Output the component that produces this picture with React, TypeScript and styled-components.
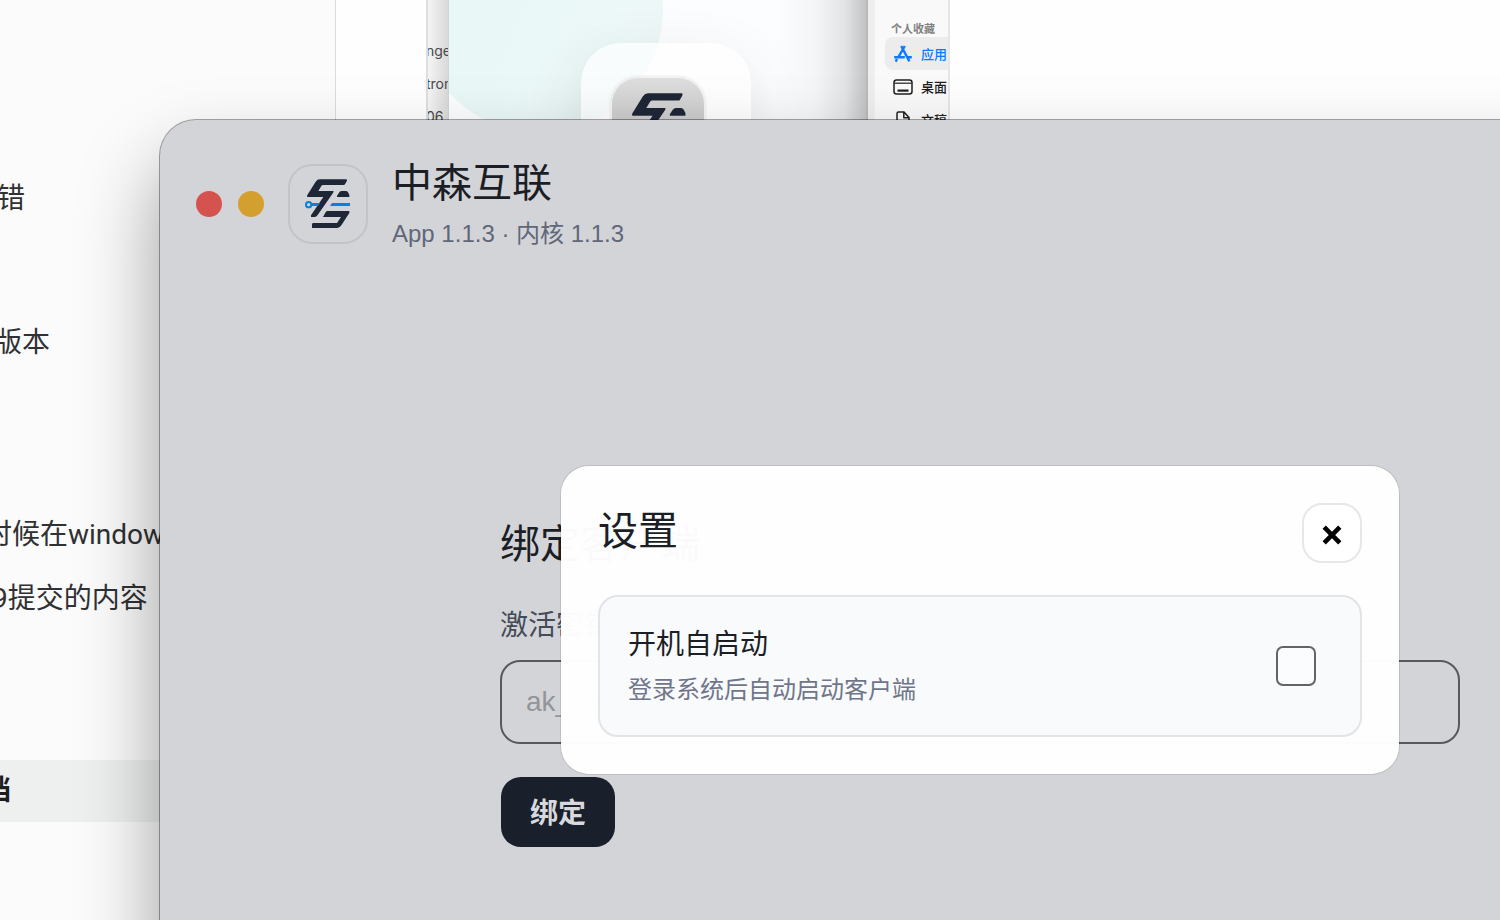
import React from 'react';
import styled, { createGlobalStyle } from 'styled-components';

const GlobalStyle = createGlobalStyle`
  *, *::before, *::after { box-sizing: border-box; }
  body {
    margin: 0;
    background: #fff;
    font-family: "Liberation Sans", "Noto Sans CJK SC", sans-serif;
  }
  h1, h2, p { margin: 0; font-weight: 400; }
  button, input { font: inherit; }
`;

const Desktop = styled.div`
  position: relative;
  height: 100vh;
  overflow: hidden;
  background: #fefefe;
`;

/* ---------- windows lying behind ---------- */

const Backdrop = styled.div`
  display: flex;
  height: 100%;
`;

const NotesPane = styled.aside`
  flex: 0 0 336px;
  padding-top: 168px;
  overflow: hidden;
  background: #fbfbfb;
  border-right: 1px solid #dcdcdc;
  font-family: Roboto, "Noto Sans CJK SC", sans-serif;
`;

const NoteLine = styled.p<{ $cut: number; $space?: number; $active?: boolean }>`
  height: 62px;
  margin-top: ${(p) => p.$space ?? 0}px;
  line-height: 62px;
  font-size: 28px;
  font-weight: ${(p) => (p.$active ? 700 : 400)};
  color: ${(p) => (p.$active ? '#1c1d1e' : '#303133')};
  background: ${(p) => (p.$active ? '#eef0ef' : 'transparent')};
  text-indent: -${(p) => p.$cut}px;
  white-space: nowrap;
`;

const BackWindows = styled.div`
  flex: 0 0 524px;
  display: flex;
  margin-left: 90px;
  height: 240px;
`;

const FileList = styled.div`
  flex: 0 0 22px;
  padding-top: 35px;
  overflow: hidden;
  border-left: 2px solid #dedede;
  background: linear-gradient(90deg, #f4f4f4, #d9d9d9);
  font: 14px/32px Inter, sans-serif;
  color: #474747;
`;

const FileName = styled.p`
  height: 33px;
  white-space: nowrap;
  text-indent: -2px;
`;

const Splash = styled.div`
  position: relative;
  flex: 1;
  padding: 43px 0 0 132px;
  overflow: hidden;
  background: linear-gradient(90deg, #fcfdff 78%, #f4f5f7 88%, #e2e3e4 95%, #c2c3c4);
  border-left: 1px solid #cfd5d5;
`;

const TealDisc = styled.div`
  position: absolute;
  left: -32px;
  top: -113px;
  width: 246px;
  height: 246px;
  border-radius: 50%;
  background: linear-gradient(115deg, #e9f8f7 45%, #f0f7f8);
`;

const GlassCard = styled.div`
  position: relative;
  width: 170px;
  height: 170px;
  padding: 35px 0 0 31px;
  border-radius: 40px;
  background: rgba(255, 255, 255, 0.65);
  box-shadow: 0 20px 60px rgba(40, 60, 60, 0.12);
`;

const SplashTile = styled.div`
  display: flex;
  justify-content: center;
  align-items: center;
  width: 92px;
  height: 92px;
  border-radius: 26px;
  background: linear-gradient(#dedede, #c4c4c4 60%);
  box-shadow: 0 0 0 1px #f4f4f4, 0 0 4px rgba(0, 0, 0, 0.2);
  svg { flex: none; }
`;

const Finder = styled.nav`
  flex: 0 0 84px;
  padding: 19px 0 0 8px;
  overflow: hidden;
  border-left: 2px solid #b9b9b9;
  border-right: 2px solid #e6e6e6;
  background: linear-gradient(90deg, #eeeeee 6px, #f9f9f9 7px);
  font-family: "Noto Sans CJK SC", sans-serif;
`;

const FinderHeading = styled.p`
  padding-left: 15px;
  font-size: 11px;
  font-weight: 700;
  line-height: 18px;
  color: #808080;
  white-space: nowrap;
`;

const FinderItem = styled.a<{ $active?: boolean }>`
  display: flex;
  align-items: center;
  gap: 8px;
  height: 33px;
  margin-left: 9px;
  padding-left: 8px;
  border-radius: 8px 0 0 8px;
  background: ${(p) => (p.$active ? '#ececed' : 'transparent')};
  color: ${(p) => (p.$active ? '#0a7aff' : '#1f1f1f')};
  font-size: 13px;
  font-weight: 500;
  text-decoration: none;
  white-space: nowrap;
  svg { flex: none; }
`;

/* ---------- client window ---------- */

const AppWindow = styled.main`
  position: absolute;
  inset: 120px -300px -200px 160px;
  border-radius: 36px;
  background: #d3d4d8;
  box-shadow: 0 0 0 1px rgba(0, 0, 0, 0.35), 0 44px 80px rgba(0, 0, 0, 0.38);
`;

const Header = styled.header`
  display: flex;
  align-items: center;
  gap: 24px;
  height: 168px;
  padding: 0 36px;
`;

const Lights = styled.div`
  display: flex;
  gap: 16px;
`;

const Light = styled.button<{ $color: string }>`
  width: 26px;
  height: 26px;
  padding: 0;
  border: 0;
  border-radius: 50%;
  background: ${(p) => p.$color};
`;

const LogoTile = styled.div`
  display: flex;
  justify-content: center;
  align-items: center;
  width: 80px;
  height: 80px;
  border: 2px solid #c3c4c7;
  border-radius: 24px;
  svg { flex: none; }
`;

const Brand = styled.div`
  display: grid;
  gap: 12px;
`;

const Heading = styled.h1`
  font-size: 40px;
  line-height: 48px;
  color: #1c1e25;
`;

const Version = styled.p`
  font-size: 24px;
  line-height: 30px;
  color: #616778;
`;

const BindForm = styled.form`
  display: flex;
  flex-direction: column;
  align-items: flex-start;
  width: 100%;
  max-width: 960px;
  margin: 232px auto 0;
`;

const FieldLabel = styled.label`
  margin: 42px 0 18px;
  font-size: 28px;
  line-height: 32px;
  color: #444b58;
`;

const KeyInput = styled.input`
  width: 100%;
  height: 84px;
  padding: 0 24px;
  border: 2px solid #58595c;
  border-radius: 20px;
  background: transparent;
  font-size: 28px;
  &::placeholder { color: #949598; opacity: 1; }
`;

const SubmitButton = styled.button`
  height: 70px;
  margin: 33px 0 0 1px;
  padding: 0 29px 2px;
  border: 0;
  border-radius: 20px;
  background: #191f2b;
  color: #d8d9dd;
  font-size: 28px;
  font-weight: 700;
`;

/* ---------- settings dialog ---------- */

const Overlay = styled.div`
  position: absolute;
  inset: 0;
  display: flex;
  align-items: center;
  justify-content: center;
`;

const Dialog = styled.section`
  width: 838px;
  padding: 37px;
  border-radius: 28px;
  background: rgba(255, 255, 255, 0.98);
  box-shadow: 0 0 0 1px rgba(0, 0, 0, 0.1);
`;

const DialogHead = styled.div`
  display: flex;
  justify-content: space-between;
  align-items: flex-start;
  height: 60px;
  margin-bottom: 32px;
`;

const DialogTitle = styled(Heading)`
  line-height: 56px;
`;

const CloseButton = styled.button`
  display: grid;
  place-items: center;
  width: 60px;
  height: 60px;
  padding: 4px 0 0;
  border: 2px solid #e7e7e9;
  border-radius: 20px;
  background: #fff;
`;

const SettingRow = styled.label`
  display: flex;
  justify-content: space-between;
  align-items: center;
  height: 142px;
  padding: 0 44px 0 28px;
  border: 2px solid #e3e4e7;
  border-radius: 20px;
  background: #f9fafc;
`;

const SettingText = styled.span`
  display: grid;
  gap: 12px;
`;

const SettingName = styled.span`
  font-size: 28px;
  line-height: 36px;
  color: #1c1e25;
`;

const SettingHint = styled.span`
  font-size: 24px;
  line-height: 30px;
  color: #70768a;
`;

const Checkbox = styled.input`
  appearance: none;
  width: 40px;
  height: 40px;
  margin: 0;
  border: 2px solid #636467;
  border-radius: 7px;
  background: #fbfcfd;
`;

const Logo = ({ size }: { size: number }) => (
  <svg width={size} height={size} viewBox="24 27 240 240" aria-hidden="true">
    <path
      fill="#1f2737"
      d="M119 73H199Q203 74 200 79L195 88Q194 90 191 90H129Q126 90 124 93L115 108H160Q162 110 159 114L113 180Q109 186 104 186H93V181L130 126H82Q80 124 82 120L107 80Q112 73 119 73Z"
    />
    <path fill="#1f2737" d="M185 108H197Q202 108 204 112L208 120V126H171Q170 124 172 121L178 112Q181 108 185 108Z" />
    <path
      fill="#1f2737"
      d="M142 168H208V174L184 211Q179 219 172 219H96V207Q97 204 100 204H171L183 186H129L136 173Q138 168 142 168Z"
    />
    <path fill="#0a80da" d="M95 144H120L114 153H95ZM156 144H210V153H150Z" />
    <circle cx="86" cy="149" r="8" fill="none" stroke="#0a80da" strokeWidth="6" />
  </svg>
);

export default function App() {
  return (
    <>
      <GlobalStyle />
      <Desktop>
        <Backdrop>
          <NotesPane>
            <NoteLine $cut={3}>错</NoteLine>
            <NoteLine $cut={6} $space={82}>版本</NoteLine>
            <NoteLine $cut={16} $space={130}>时候在windows</NoteLine>
            <NoteLine $cut={8} $space={2}>9提交的内容</NoteLine>
            <NoteLine $cut={17} $space={130} $active>档</NoteLine>
          </NotesPane>
          <BackWindows>
            <FileList>
              <FileName>nge</FileName>
              <FileName>tron</FileName>
              <FileName>06</FileName>
            </FileList>
            <Splash>
              <TealDisc />
              <GlassCard>
                <SplashTile>
                  <Logo size={101} />
                </SplashTile>
              </GlassCard>
            </Splash>
            <Finder>
              <FinderHeading>个人收藏</FinderHeading>
              <FinderItem href="#apps" $active>
                <svg width="20" height="20" viewBox="0 0 20 20" fill="none" stroke="currentColor" strokeWidth="2.400">
                  <path d="M11.800 2 4.800 14.200M8.200 2l8.200 15.400M1.200 13.200h10.600M14.500 13.200h4.300M4 15l-1.300 2.600" />
                </svg>
                应用
              </FinderItem>
              <FinderItem href="#desktop">
                <svg width="20" height="20" viewBox="0 0 20 20" fill="none" stroke="currentColor" strokeWidth="1.500">
                  <rect x="1" y="3" width="18" height="14" rx="2.500" />
                  <path d="M1.500 6.200h17" strokeWidth="1.200" />
                  <path d="M4.500 13.600h11" strokeWidth="2.200" />
                </svg>
                桌面
              </FinderItem>
              <FinderItem href="#documents">
                <svg width="20" height="20" viewBox="0 0 20 20" fill="none" stroke="currentColor" strokeWidth="1.500" strokeLinejoin="round">
                  <path d="M4 17V3.500Q4 2 5.500 2H11l5 5.500V17Q16 18.500 14.500 18.500H5.500Q4 18.500 4 17ZM10.800 2v5.700H16" />
                </svg>
                文稿
              </FinderItem>
            </Finder>
          </BackWindows>
        </Backdrop>

        <AppWindow>
          <Header>
            <Lights>
              <Light $color="#d5534f" aria-label="关闭窗口" />
              <Light $color="#d3a02f" aria-label="最小化窗口" />
            </Lights>
            <LogoTile>
              <Logo size={80} />
            </LogoTile>
            <Brand>
              <Heading>中森互联</Heading>
              <Version>App 1.1.3 · 内核 1.1.3</Version>
            </Brand>
          </Header>

          <BindForm>
            <Heading as="h2">绑定客户端</Heading>
            <FieldLabel htmlFor="key">激活密钥</FieldLabel>
            <KeyInput id="key" type="text" placeholder="ak_xxx" />
            <SubmitButton type="button">绑定</SubmitButton>
          </BindForm>

          <Overlay>
            <Dialog role="dialog" aria-labelledby="settings-title">
              <DialogHead>
                <DialogTitle as="h2" id="settings-title">设置</DialogTitle>
                <CloseButton type="button" aria-label="关闭">
                  <svg width="20" height="20" viewBox="0 0 20 20" fill="none" stroke="#000" strokeWidth="4.600">
                    <path d="M2.200 2.200 17.800 17.800M17.800 2.200 2.200 17.800" />
                  </svg>
                </CloseButton>
              </DialogHead>
              <SettingRow>
                <SettingText>
                  <SettingName>开机自启动</SettingName>
                  <SettingHint>登录系统后自动启动客户端</SettingHint>
                </SettingText>
                <Checkbox type="checkbox" />
              </SettingRow>
            </Dialog>
          </Overlay>
        </AppWindow>
      </Desktop>
    </>
  );
}
